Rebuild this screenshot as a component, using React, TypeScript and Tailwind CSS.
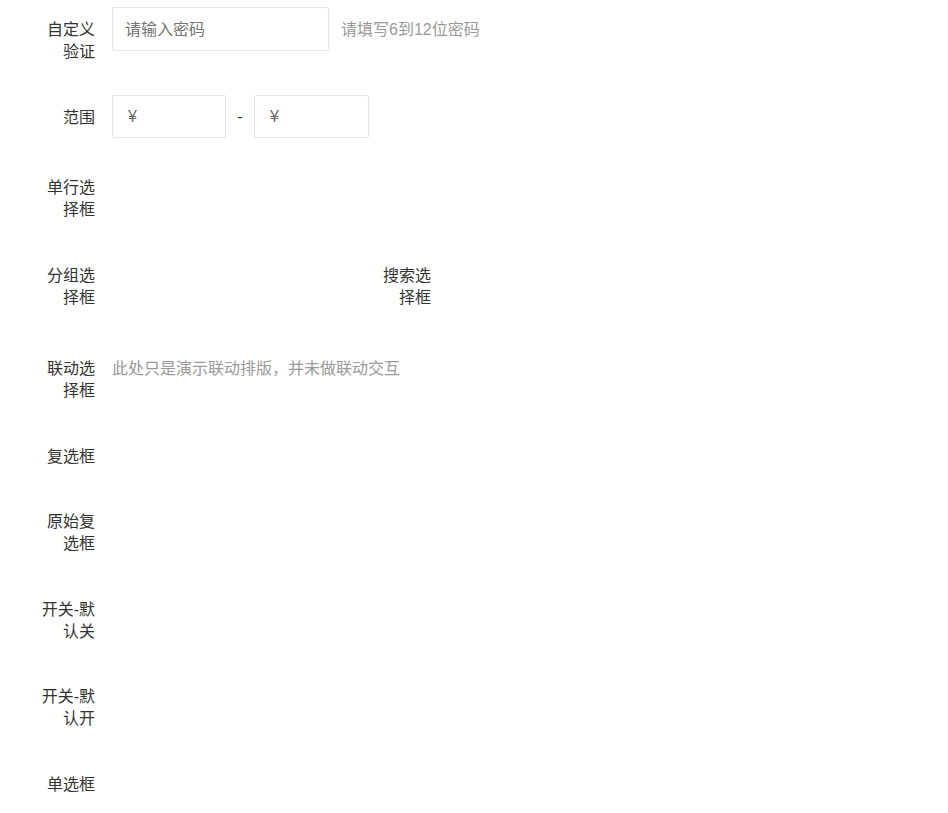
const font = "font-['Liberation_Sans','Noto_Sans_CJK_SC',sans-serif]";

function Label(props: { text: string; className?: string }) {
  return (
    <div
      className={`w-[95px] shrink-0 pl-[37px] pt-[12px] text-right text-[16px] leading-[22px] text-[#333] ${props.className ?? ""}`}
    >
      {props.text}
    </div>
  );
}

export default function App() {
  return (
    <div className={`${font} min-h-screen bg-white pt-[7px] text-[16px]`}>
      {/* 自定义验证 */}
      <div className="flex h-[88px] items-start">
        <Label text="自定义验证" />
        <div className="ml-[17px] flex h-[44px] w-[217px] items-center rounded-[2px] border border-[#e6e6e6] px-[12px] pt-[1px] text-[#757575]">
          请输入密码
        </div>
        <div className="ml-[12px] flex h-[44px] items-center pt-[1px] text-[#999]">
          请填写6到12位密码
        </div>
      </div>

      {/* 范围 */}
      <div className="flex h-[70px] items-start">
        <Label text="范围" />
        <div className="ml-[17px] flex h-[43px] w-[114px] items-center rounded-[2px] border border-[#e6e6e6] px-[15px] pt-[1px] text-[#666]">
          ¥
        </div>
        <div className="flex h-[43px] w-[28px] items-center justify-center pt-[1px] text-[#333]">
          -
        </div>
        <div className="flex h-[43px] w-[115px] items-center rounded-[2px] border border-[#e6e6e6] px-[15px] pt-[1px] text-[#666]">
          ¥
        </div>
      </div>

      {/* 单行选择框 */}
      <div className="flex h-[88px] items-start">
        <Label text="单行选择框" />
      </div>

      {/* 分组选择框 / 搜索选择框 */}
      <div className="flex h-[93px] items-start">
        <Label text="分组选择框" />
        <Label text="搜索选择框" className="ml-[241px]" />
      </div>

      {/* 联动选择框 */}
      <div className="flex h-[88px] items-start">
        <Label text="联动选择框" />
        <div className="ml-[17px] pt-[12px] leading-[22px] text-[#999]">
          此处只是演示联动排版，并未做联动交互
        </div>
      </div>

      <div className="flex h-[65px] items-start">
        <Label text="复选框" />
      </div>

      <div className="flex h-[88px] items-start">
        <Label text="原始复选框" />
      </div>

      <div className="flex h-[87px] items-start">
        <Label text="开关-默认关" />
      </div>

      <div className="flex h-[88px] items-start">
        <Label text="开关-默认开" />
      </div>

      <div className="flex h-[44px] items-start">
        <Label text="单选框" />
      </div>
    </div>
  );
}
